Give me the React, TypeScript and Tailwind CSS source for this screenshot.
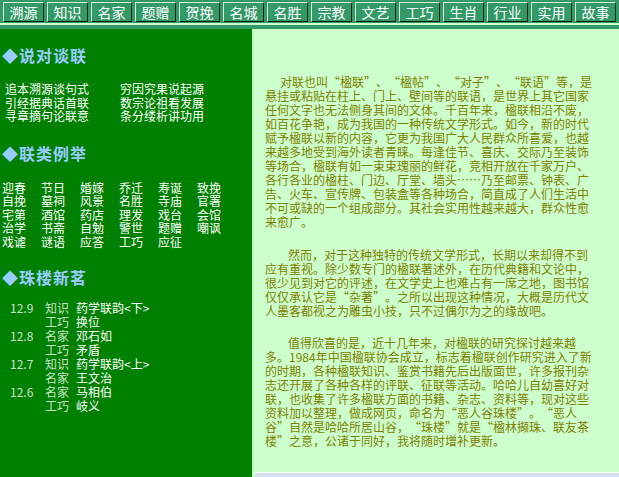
import React from 'react';

const NAV = ['溯源', '知识', '名家', '题赠', '贺挽', '名城', '名胜', '宗教', '文艺', '工巧', '生肖', '行业', '实用', '故事'];

const COUPLETS = [
  ['追本溯源谈句式', '穷因究果说起源'],
  ['引经据典话首联', '数宗论祖看发展'],
  ['寻章摘句论联意', '条分缕析讲功用'],
];

const KINDS = [
  '迎春', '节日', '婚嫁', '乔迁', '寿诞', '致挽',
  '自挽', '墓祠', '风景', '名胜', '寺庙', '官署',
  '宅第', '酒馆', '药店', '理发', '戏台', '会馆',
  '治学', '书斋', '自勉', '警世', '题赠', '嘲讽',
  '戏谑', '谜语', '应答', '工巧', '应征',
];

const NEWS = [
  { date: '12.9', cat: '知识', title: '药学联韵<下>' },
  { date: '', cat: '工巧', title: '换位' },
  { date: '12.8', cat: '名家', title: '邓石如' },
  { date: '', cat: '工巧', title: '矛盾' },
  { date: '12.7', cat: '知识', title: '药学联韵<上>' },
  { date: '', cat: '名家', title: '王文治' },
  { date: '12.6', cat: '名家', title: '马相伯' },
  { date: '', cat: '工巧', title: '岐义' },
];

const P1 = [
  '对联也叫“楹联”、“楹帖”、“对子”、“联语”等，是',
  '悬挂或粘贴在柱上、门上、壁间等的联语，是世界上其它国家',
  '任何文字也无法侧身其间的文体。千百年来，楹联相沿不废，',
  '如百花争艳，成为我国的一种传统文学形式。如今，新的时代',
  '赋予楹联以新的内容，它更为我国广大人民群众所喜爱，也越',
  '来越多地受到海外读者青睐。每逢佳节、喜庆、交际乃至装饰',
  '等场合，楹联有如一束束瑰丽的鲜花，竞相开放在千家万户、',
  '各行各业的楹柱、门边、厅堂、墙头……乃至邮票、钟表、广',
  '告、火车、宣传牌、包装盒等各种场合，简直成了人们生活中',
  '不可或缺的一个组成部分。其社会实用性越来越大，群众性愈',
  '来愈广。',
];

const P2 = [
  '然而，对于这种独特的传统文学形式，长期以来却得不到',
  '应有重视。除少数专门的楹联著述外，在历代典籍和文论中，',
  '很少见到对它的评述，在文学史上也难占有一席之地，图书馆',
  '仅仅承认它是“杂著”。之所以出现这种情况，大概是历代文',
  '人墨客都视之为雕虫小技，只不过偶尔为之的缘故吧。',
];

const P3_REST = [
  '的时期，各种楹联知识、鉴赏书籍先后出版面世，许多报刊杂',
  '志还开展了各种各样的评联、征联等活动。哈哈儿自幼喜好对',
  '联，也收集了许多楹联方面的书籍、杂志、资料等，现对这些',
  '资料加以整理，做成网页，命名为“恶人谷珠楼”。“恶人',
  '谷”自然是哈哈所居山谷，“珠楼”就是“楹林撷珠、联友茶',
  '楼”之意，公诸于同好，我将随时增补更新。',
];

function Heading({ children }: { children: React.ReactNode }) {
  return (
    <h3 className="h-[20px] text-[16px] font-bold leading-[20px] tracking-[1px] text-[#99ccff]">
      ◆{children}
    </h3>
  );
}

export default function App() {
  return (
    <div
      lang="zh-CN"
      className="flex h-[477px] flex-col overflow-hidden bg-[#339966] font-['Noto_Sans_CJK_SC',sans-serif] [text-spacing-trim:space-all]"
    >
      {/* top buttons */}
      <nav className="flex h-[23px] gap-[3px] px-[3px] pt-[2px]">
        {NAV.map((n) => (
          <span
            key={n}
            className="flex h-[20px] w-[41px] items-center justify-center border border-t-[#d8ecd8] border-l-[#d8ecd8] border-r-[#102010] border-b-[#102010] bg-[#339966] text-[14px] leading-none text-white"
          >
            {n}
          </span>
        ))}
      </nav>
      <div className="h-[2px] bg-[#ccffcc]" />
      <div className="h-[4px]" />

      <div className="flex min-h-0 flex-1">
        {/* left column */}
        <aside className="w-[252px] shrink-0 bg-[#008000] pl-[2px] pt-[16px]">
          <Heading>说对谈联</Heading>
          <div className="mt-[17px] text-[12px] leading-[13.5px] text-white">
            {COUPLETS.map(([a, b]) => (
              <div key={a} className="flex pl-[3px]">
                <span className="w-[115px]">{a}</span>
                <span>{b}</span>
              </div>
            ))}
          </div>

          <div className="mt-[20px]">
            <Heading>联类例举</Heading>
          </div>
          <div className="mt-[18px] grid grid-cols-[repeat(6,39px)] text-[12px] leading-[13.5px] text-white">
            {KINDS.map((k, i) => (
              <span key={i}>{k}</span>
            ))}
          </div>

          <div className="mt-[19px]">
            <Heading>珠楼新茗</Heading>
          </div>
          <div className="mt-[14px] pl-[8px] text-[12px] leading-[14px]">
            {NEWS.map((r, i) => (
              <div key={i} className="flex">
                <span className="w-[35px] text-[#cce0cc]">{r.date}</span>
                <span className="w-[31px] text-[#cce0cc]">{r.cat}</span>
                <span className="text-white">{r.title}</span>
              </div>
            ))}
          </div>
        </aside>

        {/* right column */}
        <main className="flex flex-1 flex-col bg-[#ccffcc] pt-[46px] text-[12px] leading-[14px] text-[#808000] [font-feature-settings:'fwid']">
          <div className="pl-[13px]">
            <div className="whitespace-nowrap">
              {P1.map((l, i) => (
                <div key={i} className={i === 0 ? 'pl-[15px]' : ''}>
                  {l}
                </div>
              ))}
            </div>
            <div className="mt-[19px] whitespace-nowrap">
              {P2.map((l, i) => (
                <div key={i} className={i === 0 ? 'pl-[23px]' : ''}>
                  {l}
                </div>
              ))}
            </div>
            <div className="mt-[18px] whitespace-nowrap">
              <div className="pl-[23px]">值得欣喜的是，近十几年来，对楹联的研究探讨越来越</div>
              <div>
                多。<span className="[font-feature-settings:normal]">1984</span>年中国楹联协会成立，标志着楹联创作研究进入了新
              </div>
              {P3_REST.map((l, i) => (
                <div key={i}>{l}</div>
              ))}
            </div>
          </div>
          <div className="mt-auto ml-[3px] h-[5px] border-t border-white bg-[#d4e0f0]" />
        </main>
      </div>
    </div>
  );
}
